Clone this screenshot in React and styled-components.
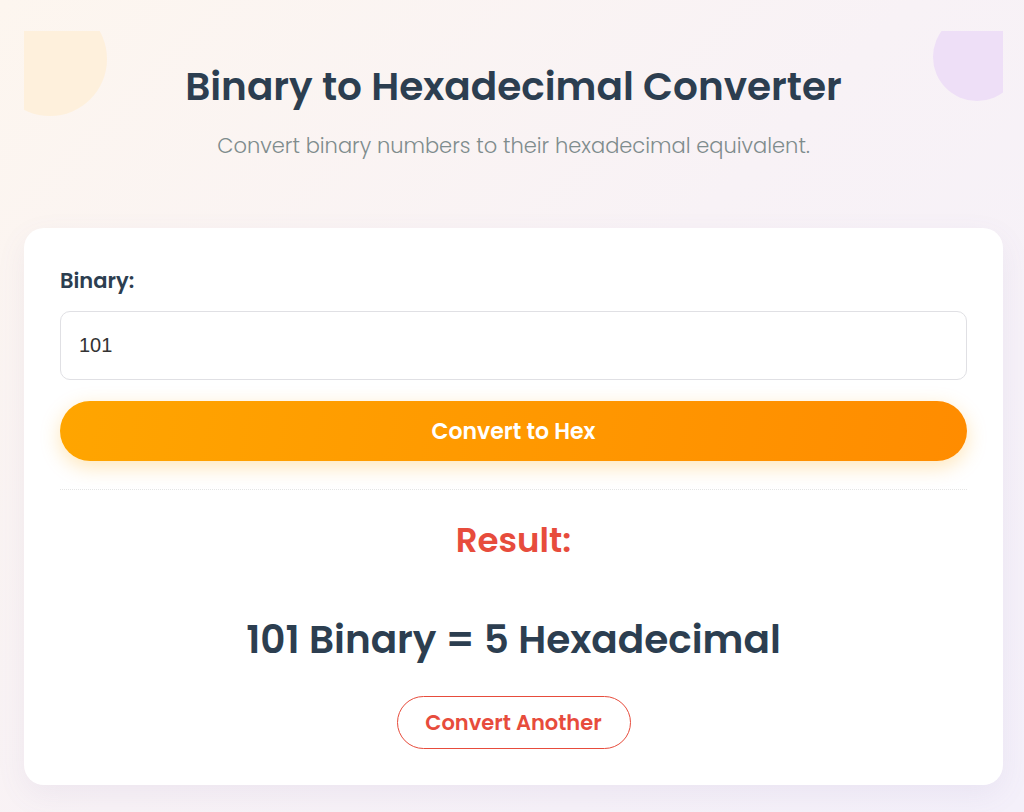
import React, { useState } from "react";
import styled, { createGlobalStyle } from "styled-components";

const GlobalStyle = createGlobalStyle`
  * {
    box-sizing: border-box;
  }
  html, body {
    margin: 0;
    min-height: 100%;
  }
  body {
    font-family: "Poppins", "Inter", "Open Sans", sans-serif;
    background: linear-gradient(135deg, #fdf6ef 0%, #f8f2f6 50%, #f4f0fa 100%);
    min-height: 812px;
  }
`;

const Page = styled.div`
  padding: 31px 21px 27px 24px;
`;

const Header = styled.header`
  position: relative;
  overflow: hidden;
  padding: 32px 20px 67px;
  text-align: center;
`;

const Blob = styled.div`
  position: absolute;
  width: ${(p) => p.size}px;
  height: ${(p) => p.size}px;
  border-radius: 50%;
  background: ${(p) => p.color};
  top: ${(p) => p.top}px;
  ${(p) => (p.side === "left" ? `left: ${p.offset}px;` : `right: ${p.offset}px;`)}
`;

const Title = styled.h1`
  position: relative;
  margin: 0;
  font-size: 39px;
  line-height: 48px;
  font-weight: 600;
  color: #2c3e50;
`;

const Subtitle = styled.p`
  position: relative;
  margin: 20px 0 0;
  font-size: 21px;
  line-height: 30px;
  font-weight: 300;
  color: #7f8c8d;
`;

const Card = styled.main`
  background: #ffffff;
  border-radius: 20px;
  padding: 38px 36px 36px;
  box-shadow: 0 10px 30px rgba(120, 100, 160, 0.08);
`;

const Label = styled.label`
  display: block;
  font-size: 21px;
  line-height: 30px;
  font-weight: 600;
  color: #2c3e50;
`;

const Input = styled.input`
  display: block;
  width: 100%;
  height: 69px;
  margin-top: 15px;
  padding: 0 18px;
  border: 1px solid #e0e0e4;
  border-radius: 10px;
  font-family: "Liberation Sans", Arial, sans-serif;
  font-size: 20px;
  color: #333333;
  outline: none;
`;

const ConvertButton = styled.button`
  display: block;
  width: 100%;
  height: 60px;
  margin-top: 21px;
  border: none;
  border-radius: 30px;
  background: linear-gradient(100deg, #ffa500 0%, #ff8c00 100%);
  box-shadow: 0 6px 20px rgba(255, 165, 0, 0.28);
  color: #ffffff;
  font-family: inherit;
  font-size: 22px;
  font-weight: 600;
  cursor: pointer;
`;

const Divider = styled.hr`
  margin: 28px 0 0;
  border: none;
  border-top: 1px dotted #e4e4e4;
`;

const ResultBox = styled.section`
  display: flex;
  flex-direction: column;
  align-items: center;
`;

const ResultTitle = styled.h2`
  margin: 30px 0 0;
  font-size: 34px;
  line-height: 40px;
  font-weight: 600;
  color: #e74c3c;
`;

const ResultValue = styled.p`
  margin: 56px 0 0;
  font-size: 39px;
  line-height: 47px;
  font-weight: 600;
  color: #2c3e50;
`;

const AgainButton = styled.button`
  margin-top: 33px;
  width: 234px;
  height: 53px;
  border: 1px solid #e74c3c;
  border-radius: 27px;
  background: transparent;
  color: #e74c3c;
  font-family: inherit;
  font-size: 21px;
  font-weight: 600;
  cursor: pointer;
`;

export default function App() {
  const [value, setValue] = useState("101");
  const hex = parseInt(value || "0", 2).toString(16).toUpperCase();

  return (
    <>
      <GlobalStyle />
      <Page>
        <Header>
          <Blob side="left" size={114} top={-29} offset={-31} color="#fef0dc" />
          <Blob side="right" size={88} top={-18} offset={-18} color="#eedff7" />
          <Title>Binary to Hexadecimal Converter</Title>
          <Subtitle>Convert binary numbers to their hexadecimal equivalent.</Subtitle>
        </Header>
        <Card>
          <Label htmlFor="binary">Binary:</Label>
          <Input
            id="binary"
            value={value}
            onChange={(e) => setValue(e.target.value)}
          />
          <ConvertButton>Convert to Hex</ConvertButton>
          <Divider />
          <ResultBox>
            <ResultTitle>Result:</ResultTitle>
            <ResultValue>
              {value} Binary = {hex} Hexadecimal
            </ResultValue>
            <AgainButton>Convert Another</AgainButton>
          </ResultBox>
        </Card>
      </Page>
    </>
  );
}
